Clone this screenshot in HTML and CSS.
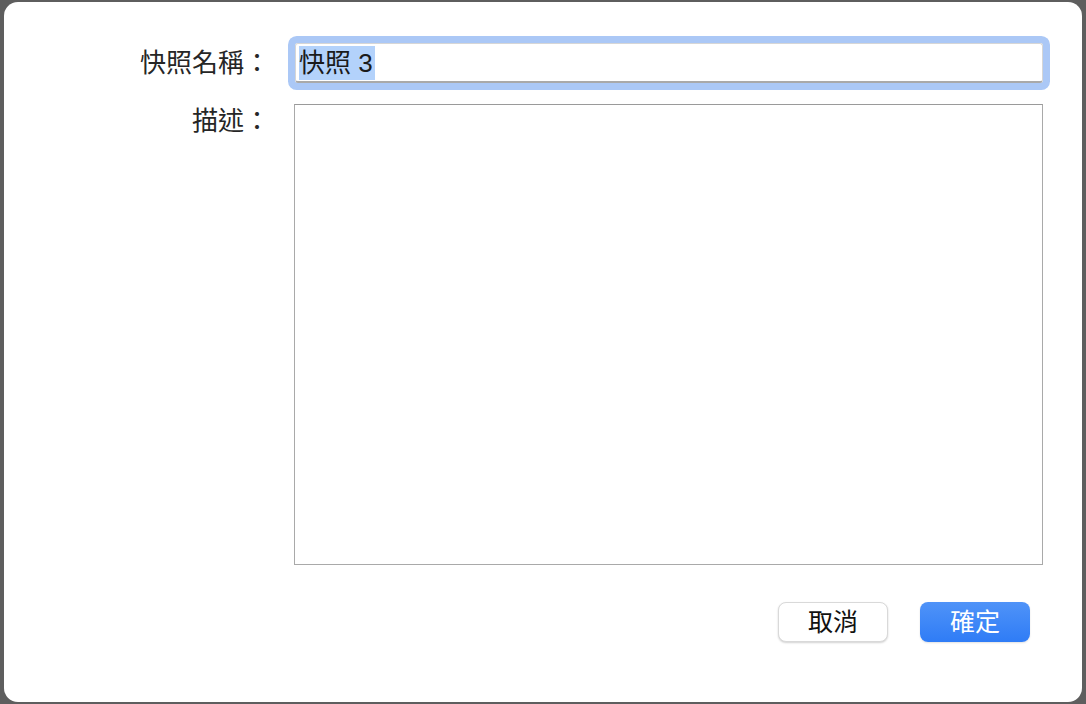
FILE: index.html
```html
<!DOCTYPE html>
<html lang="zh-Hant">
<head>
  <meta charset="UTF-8" />
  <title>快照</title>
  <link rel="stylesheet" href="styles.css">
</head>
<body>
  <div class="dialog">
    <div class="form">
      <label class="label label-name">快照名稱：</label>
      <div class="field-name">
        <span class="seleccion">快照 3</span>
      </div>

      <label class="label label-desc">描述：</label>
      <div class="field-desc"></div>
    </div>

    <div class="acciones">
      <button class="btn btn-cancelar">取消</button>
      <button class="btn btn-ok">確定</button>
    </div>
  </div>
</body>
</html>
```

FILE: styles.css
```css
:root {
  --gris-marco: #5e5e5e;
  --blanco: #ffffff;
  --texto: #262626;
  --anillo: #abc8f6;
  --seleccion: #b3d2fb;
  --borde: #a9a9a9;
  --azul: #3a84f7;
}

html,
body {
  margin: 0;
  height: 100%;
}

body {
  background-color: var(--gris-marco);
  font-family: "Liberation Sans", "Noto Sans CJK TC", sans-serif;
  color: var(--texto);
  padding: 2px 4px 2px 4px;
  box-sizing: border-box;
}

.dialog {
  height: 700px;
  width: 1078px;
  background-color: var(--blanco);
  border-radius: 14px;
  box-sizing: border-box;
  padding-top: 41px;
}

.form {
  display: grid;
  grid-template-columns: 266px 749px;
  column-gap: 24px;
  row-gap: 21px;
}

.label {
  text-align: right;
  font-size: 26px;
  line-height: 40px;
  white-space: nowrap;
}

.label-desc {
  line-height: 34px;
}

.field-name {
  height: 40px;
  box-sizing: border-box;
  border: 1px solid #d6d6d6;
  border-bottom: 2px solid var(--borde);
  box-shadow: 0 0 0 7px var(--anillo);
  border-radius: 3px;
  padding-left: 3px;
  display: flex;
  align-items: center;
  font-size: 26px;
  margin-left: 1px;
}

.seleccion {
  background-color: var(--seleccion);
  color: #1a1a1a;
  line-height: 34px;
  padding-right: 2px;
}

.field-desc {
  height: 461px;
  box-sizing: border-box;
  border: 1px solid var(--borde);
  border-top-color: #9a9a9a;
}

.acciones {
  display: flex;
  justify-content: flex-end;
  gap: 32px;
  margin-top: 37px;
  padding-right: 52px;
}

.btn {
  width: 110px;
  height: 40px;
  border-radius: 8px;
  font-family: "Liberation Sans", "Noto Sans CJK TC", sans-serif;
  font-size: 25px;
  line-height: 1;
  padding: 0;
  cursor: pointer;
}

.btn-cancelar {
  background-color: var(--blanco);
  color: #111111;
  border: 1px solid #d9d9d9;
  box-shadow: 0 1px 2px rgba(0, 0, 0, 0.18);
}

.btn-ok {
  background: linear-gradient(#4f93f8, #2f7cf6);
  color: var(--blanco);
  border: none;
  box-shadow: 0 1px 2px rgba(0, 0, 0, 0.12);
}
```
